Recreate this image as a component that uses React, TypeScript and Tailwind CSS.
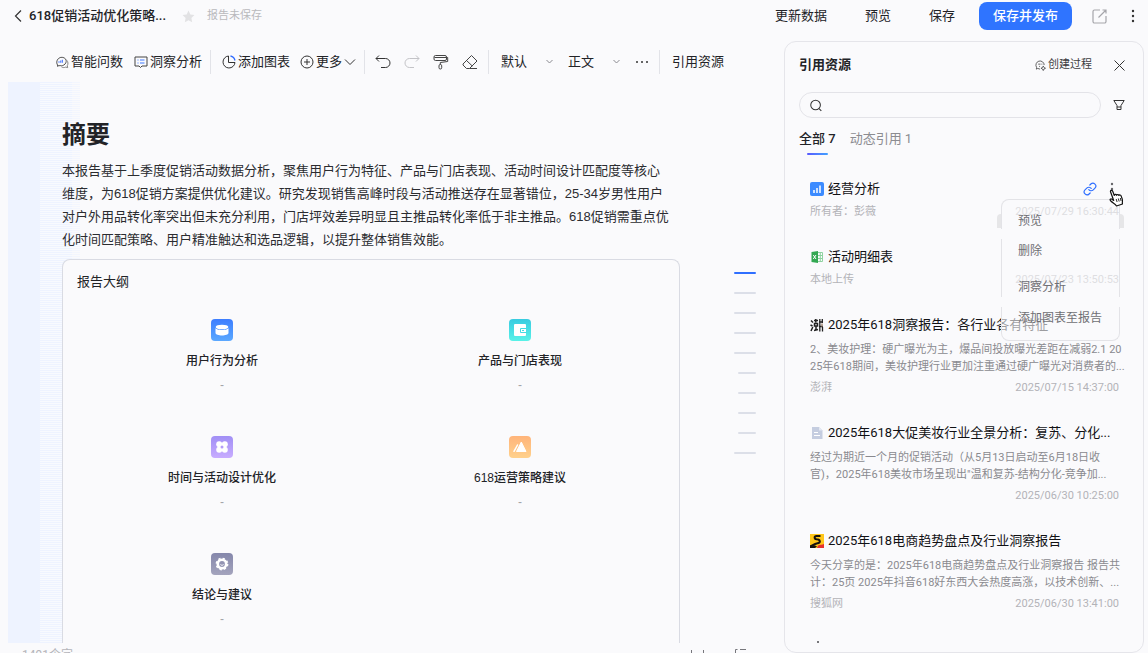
import { Link } from 'lucide-react';
import clsx from 'clsx';

interface Resource {
  title: string;
  icon: React.ReactNode;
  source: string;
  date: string;
  lines?: string[];
}

function AskIcon() {
  return (
    <svg width="14" height="14" viewBox="0 0 14 14" fill="none" stroke="#444" strokeWidth="0.9">
      <path d="M3 10.700A5 5 0 1 1 10.600 4c.9 1.600.8 3.600-.6 5.100-1.300 1.400-3.100 1.900-4.900 1.500L2 11z" />
      <path d="M11.800 5.300c1.400 1.500 1.500 3.800.5 5.300l.4 2-2-.5c-1.700.8-3.200.5-4.300-.3" stroke="#777" />
      <path d="M4 7.800V6.300M5.700 7.800V5.600M7.400 7.800V4.800" stroke="#5b86ff" strokeWidth="1.200" />
    </svg>
  );
}

function InsightIcon() {
  return (
    <svg width="14" height="14" viewBox="0 0 14 14" fill="none" stroke="#444">
      <path d="M1 2h12v9H8L6.500 12.500 5 11H1z" strokeLinejoin="round" />
      <path d="M3.500 5h1M6 5h4.500M3.500 8h1M6 8h4.500" stroke="#3f78ff" />
    </svg>
  );
}

function PieIcon() {
  return (
    <svg width="14" height="14" viewBox="0 0 14 14" fill="none" stroke="#333">
      <path d="M6.500 1A6 6 0 1 0 13 7.500H6.500z" strokeLinejoin="round" />
      <path d="M8.500 1c2.500.5 4 2 4.500 4.500" stroke="#2f6bff" strokeWidth="1.300" />
    </svg>
  );
}

function PlusCircleIcon() {
  return (
    <svg width="14" height="14" viewBox="0 0 14 14" fill="none" stroke="#333">
      <circle cx="7" cy="7" r="6" />
      <path d="M7 4v6M4 7h6" />
    </svg>
  );
}

function UndoIcon() {
  return (
    <svg width="16" height="16" viewBox="0 0 16 16" fill="none" stroke="currentColor">
      <path d="M4 1.500 1 4.500l3 3M1 4.500h9.500a4.500 4.500 0 0 1 0 9H6" />
    </svg>
  );
}

function BrushIcon() {
  return (
    <svg width="16" height="16" viewBox="0 0 16 16" fill="none" stroke="#444">
      <rect x="1" y="1.500" width="12.500" height="5" rx="1.500" />
      <path d="M1.500 3.500H13M13.500 3.500h1.200v4L7.300 8.500v2" />
      <rect x="6" y="10.500" width="2.700" height="4.500" rx="1.300" />
    </svg>
  );
}

function EraserIcon() {
  return (
    <svg width="16" height="16" viewBox="0 0 16 16" fill="none" stroke="#444" strokeLinejoin="round">
      <path d="M9.500 1.500 15 7l-7.500 7.500h-3L1 11v-1zM4.500 6.500 10.300 12M7.500 14.500H15" />
    </svg>
  );
}

function BarsIcon() {
  return (
    <svg width="14" height="14" viewBox="0 0 14 14">
      <rect width="14" height="14" rx="2" fill="#3c8bff" />
      <path d="M4 11V8M7 11V6M10 11V3.500" stroke="#fff" strokeWidth="1.500" />
    </svg>
  );
}

function SheetIcon() {
  return (
    <svg width="14" height="14" viewBox="0 0 14 14">
      <path d="M8 2.500h4.500v9H8M8 5.500h4.500M8 8.500h4.500M10.300 2.500v9" fill="none" stroke="#8ed3a0" />
      <path d="M1.500 2 8 1v12l-6.500-1z" fill="#33a852" />
      <path d="m3.300 5 2.700 4M6 5 3.300 9" stroke="#fff" />
    </svg>
  );
}

function PaperIcon() {
  return (
    <svg width="14" height="14" viewBox="0 0 14 14">
      <path d="M2 1h7l3.500 3.500V13H2z" fill="#c5cde0" />
      <path d="M9 1v3.500h3.500z" fill="#e3e8f2" />
      <path d="M4 6.500h4M4 9.500h6" stroke="#fff" />
    </svg>
  );
}

function PengpaiIcon() {
  return (
    <svg width="14" height="14" viewBox="0 0 14 14" fill="none" stroke="#222" strokeWidth="1.500">
      <path d="m1 2.500 2 2M.5 7l2 1M1 13l1.800-4M5.800 1v3.500M4 2.500h4M4.500 5.500h3v2.500h-3zM4 12.500l4-1M6 8.500v3" />
      <path d="M9.800 1v12.500M12.300 1v4M12.500 9v4.500M9 4h4M9 8.500h4" strokeWidth="1.300" />
      <path d="M12 5.500v3" stroke="#a98e7a" />
    </svg>
  );
}

function SohuIcon() {
  return (
    <svg width="14" height="14" viewBox="0 0 14 14">
      <path d="M0 0h14v14H0z" fill="#ffc619" />
      <path d="M8 11.500c2-.8 4-.5 6-1.500v4H7z" fill="#e6322e" />
      <path d="M10.500 2H6.500C4 2 4 5 6.500 5.300c4 .3 4.500 3.400 1 4C5 9.700 3 11 0 12.500" fill="none" stroke="#16120d" strokeWidth="2" />
      <path d="M0 11.500c3-.5 5-.7 7 1L5 14H0z" fill="#16120d" />
    </svg>
  );
}

const resources: Resource[] = [
  { title: '经营分析', icon: <BarsIcon />, source: '所有者：彭薇', date: '2025/07/29 16:30:44' },
  { title: '活动明细表', icon: <SheetIcon />, source: '本地上传', date: '2025/07/23 13:50:53' },
  {
    title: '2025年618洞察报告：各行业各有特征',
    icon: <PengpaiIcon />,
    source: '澎湃',
    date: '2025/07/15 14:37:00',
    lines: ['2、美妆护理：硬广曝光为主，爆品间投放曝光差距在减弱2.1 20', '25年618期间，美妆护理行业更加注重通过硬广曝光对消费者的...'],
  },
  {
    title: '2025年618大促美妆行业全景分析：复苏、分化...',
    icon: <PaperIcon />,
    source: '',
    date: '2025/06/30 10:25:00',
    lines: ['经过为期近一个月的促销活动（从5月13日启动至6月18日收', '官)，2025年618美妆市场呈现出"温和复苏-结构分化-竞争加...'],
  },
  {
    title: '2025年618电商趋势盘点及行业洞察报告',
    icon: <SohuIcon />,
    source: '搜狐网',
    date: '2025/06/30 13:41:00',
    lines: ['今天分享的是：2025年618电商趋势盘点及行业洞察报告 报告共', '计：25页 2025年抖音618好东西大会热度高涨，以技术创新、...'],
  },
];

const outline = [
  {
    label: '用户行为分析',
    tile: 'bg-linear-to-b from-[#3d7dff] to-[#5ba8ff]',
    glyph: (
      <>
        <path d="M4.500 8.700V14c0 3.300 13 3.300 13 0V8.700c0 3-13 3-13 0z" fill="#fff" />
        <ellipse cx="11" cy="8" rx="6.300" ry="2.300" fill="#fff" />
      </>
    ),
  },
  {
    label: '产品与门店表现',
    tile: 'bg-linear-to-b from-[#38cbe0] to-[#58f2e8]',
    glyph: (
      <>
        <rect x="5" y="5" width="12" height="12" rx="1" fill="#fff" />
        <path d="M17.500 9.500h-6v4h6" fill="none" stroke="#42dbe2" />
        <path d="M13 11.500h2" stroke="#42dbe2" />
      </>
    ),
  },
  {
    label: '时间与活动设计优化',
    tile: 'bg-linear-to-b from-[#a18ff5] to-[#c8acff]',
    glyph: (
      <>
        <path d="M8.300 8.300h5.400v5.400H8.300z" fill="#fff" />
        <circle cx="8.200" cy="8.200" r="3" fill="#fff" />
        <circle cx="13.800" cy="8.200" r="3" fill="#fff" />
        <circle cx="8.200" cy="13.800" r="3" fill="#fff" />
        <circle cx="13.800" cy="13.800" r="3" fill="#fff" />
        <circle cx="11" cy="11" r="1.500" fill="#b49cf9" />
      </>
    ),
  },
  {
    label: '618运营策略建议',
    tile: 'bg-linear-to-b from-[#ffb47a] to-[#ffd18c]',
    glyph: (
      <>
        <path d="M12.300 6 17 15.500H7.500z" fill="#fff" stroke="#fff" strokeLinejoin="round" />
        <path d="M8.500 9 5 15.300" stroke="#fff" strokeWidth="1.500" strokeLinecap="round" />
      </>
    ),
  },
  {
    label: '结论与建议',
    tile: 'bg-linear-to-b from-[#8587ab] to-[#a4a4bd]',
    glyph: (
      <>
        <circle cx="11" cy="11" r="4.200" fill="none" stroke="#fff" strokeWidth="2.600" />
        <circle cx="11" cy="11" r="5.600" fill="none" stroke="#fff" strokeWidth="1.600" strokeDasharray="2.200" />
        <path d="M9.500 11.500c.8 1 2.200 1 3 0" fill="none" stroke="#fff" />
      </>
    ),
  },
];

const summary = [
  '本报告基于上季度促销活动数据分析，聚焦用户行为特征、产品与门店表现、活动时间设计匹配度等核心',
  '维度，为618促销方案提供优化建议。研究发现销售高峰时段与活动推送存在显著错位，25-34岁男性用户',
  '对户外用品转化率突出但未充分利用，门店坪效差异明显且主推品转化率低于非主推品。618促销需重点优',
  '化时间匹配策略、用户精准触达和选品逻辑，以提升整体销售效能。',
];

const anchors = ['active', 'long', 'long', 'long', 'long', 'short', 'short', 'short', 'short', 'long'];

function Divider() {
  return <span className="h-6 w-px bg-[#e2e3e8]" />;
}

function ToolButton({ icon, label }: { icon: React.ReactNode; label: string }) {
  return (
    <button className="flex items-center gap-0.5">
      {icon}
      {label}
    </button>
  );
}

function ToolSelect({ label, value }: { label: string; value: string }) {
  return (
    <label className="relative flex w-[52px] items-center">
      <select aria-label={label} className="w-full appearance-none bg-transparent outline-none">
        <option>{value}</option>
      </select>
      <svg width="7" height="5" viewBox="0 0 7 5" fill="none" stroke="#8a8a90" className="pointer-events-none absolute right-0">
        <path d="m.5 1 3 3 3-3" />
      </svg>
    </label>
  );
}

function TopBar() {
  return (
    <header className="flex h-8 shrink-0 items-center pl-3.5 pr-3 text-[13px] leading-5">
      <button aria-label="返回">
        <svg width="8" height="12" viewBox="0 0 8 12" fill="none" stroke="#333" strokeWidth="1.200">
          <path d="M7 .5 1.500 6 7 11.500" />
        </svg>
      </button>
      <h1 className="ml-[7px] font-medium">618促销活动优化策略...</h1>
      <button aria-label="收藏" className="ml-4">
        <svg width="13" height="13" viewBox="0 0 24 24" fill="#e2e2e4">
          <path d="m12 1 3.400 7.200 7.600 1-5.600 5.400 1.400 7.900L12 18.700l-6.800 3.800 1.400-7.900L1 9.200l7.600-1z" />
        </svg>
      </button>
      <span className="ml-3 text-[11px] text-[#b9b9bd]">报告未保存</span>
      <nav className="ml-auto flex items-center gap-[38px]">
        <button>更新数据</button>
        <button>预览</button>
        <button>保存</button>
      </nav>
      <button className="ml-6 h-7 rounded-lg bg-[#2f74ff] px-3.5 font-medium text-white">保存并发布</button>
      <button aria-label="分享" className="ml-5">
        <svg width="15" height="15" viewBox="0 0 15 15" fill="none" stroke="#a5a5aa" strokeWidth="1.200">
          <path d="M8 1H2.500A1.500 1.500 0 0 0 1 2.500v10A1.500 1.500 0 0 0 2.500 14h10a1.500 1.500 0 0 0 1.500-1.500V7M6.500 8.500 14 1M10.500 1H14v3.500" />
        </svg>
      </button>
      <button aria-label="更多操作" className="ml-[23px]">
        <svg width="6" height="14" viewBox="0 0 6 14" fill="#333">
          <circle cx="3" cy="2" r="1.200" />
          <circle cx="3" cy="7" r="1.200" />
          <circle cx="3" cy="12" r="1.200" />
        </svg>
      </button>
    </header>
  );
}

function Toolbar() {
  return (
    <div className="mt-[9px] flex h-[41px] shrink-0 items-center whitespace-nowrap pl-[55px] text-[13px] leading-5">
      <div className="mr-2 flex gap-[11px]">
        <ToolButton icon={<AskIcon />} label="智能问数" />
        <ToolButton icon={<InsightIcon />} label="洞察分析" />
      </div>
      <Divider />
      <div className="ml-[11px] mr-2 flex gap-2.5">
        <ToolButton icon={<PieIcon />} label="添加图表" />
        <button className="flex items-center gap-0.5">
          <PlusCircleIcon />
          更多
          <svg width="12" height="8" viewBox="0 0 12 8" fill="none" stroke="#333">
            <path d="m1 1.500 5 5 5-5" />
          </svg>
        </button>
      </div>
      <Divider />
      <div className="mx-2.5 flex gap-[13px]">
        <button aria-label="撤销" className="text-[#333]">
          <UndoIcon />
        </button>
        <button aria-label="重做" className="-scale-x-100 text-[#c3c3c7]">
          <UndoIcon />
        </button>
        <button aria-label="格式刷">
          <BrushIcon />
        </button>
        <button aria-label="清除格式">
          <EraserIcon />
        </button>
      </div>
      <Divider />
      <div className="ml-3 mr-2.5 flex items-center gap-[15px]">
        <ToolSelect label="字体" value="默认" />
        <ToolSelect label="样式" value="正文" />
        <button aria-label="更多格式">
          <svg width="14" height="4" viewBox="0 0 14 4" fill="#333">
            <circle cx="2" cy="2" r="1" />
            <circle cx="7" cy="2" r="1" />
            <circle cx="12" cy="2" r="1" />
          </svg>
        </button>
      </div>
      <Divider />
      <button className="ml-3">引用资源</button>
    </div>
  );
}

function ReportPage() {
  return (
    <div className="relative ml-2 flex min-h-0 flex-1 overflow-hidden">
      {/* tinted margin that thins out towards the text */}
      <div className="absolute inset-y-0 left-0 flex">
        <span className="w-8 bg-[#eef3ff]" />
        <span className="w-8 bg-[repeating-linear-gradient(to_bottom,#eef3ff_0px,#eef3ff_1px,#f8fafe_1px,#f8fafe_2px)]" />
        <span className="w-2 bg-[repeating-linear-gradient(to_bottom,#f3f6fe_0px,#f3f6fe_1px,#fafafc_1px,#fafafc_2px)]" />
      </div>
      <article className="relative flex flex-1 flex-col pl-[54px] pt-[37px] font-['Liberation_Sans','Noto_Sans_CJK_SC',sans-serif]">
        <h2 className="text-2xl font-bold leading-8">摘要</h2>
        <p className="mt-2 whitespace-nowrap text-[13px] leading-[23px] text-[#2b2c30]">
          {summary.map((line) => (
            <span key={line} className="block">
              {line}
            </span>
          ))}
        </p>
        <section className="mt-2 flex-1 rounded-t-lg border border-b-0 border-[#d9dbe3] bg-[#fafafc] px-2.5 pt-3">
          <h3 className="px-1 text-[13px] leading-5">报告大纲</h3>
          <ul className="mt-[27px] grid grid-cols-2">
            {outline.map((item) => (
              <li key={item.label} className="flex h-[117px] flex-col items-center text-xs leading-5">
                <span className={clsx('size-[22px] overflow-hidden rounded', item.tile)}>
                  <svg width="22" height="22" viewBox="0 0 22 22">
                    {item.glyph}
                  </svg>
                </span>
                <span className="mt-2.5 font-medium">{item.label}</span>
                <span className="mt-1 text-[#a3a3a8]">-</span>
              </li>
            ))}
          </ul>
        </section>
      </article>
      <nav aria-label="目录" className="ml-[54px] mr-7 flex w-[22px] flex-col items-end gap-[18px] pt-[190px]">
        {anchors.map((kind, i) => (
          <a
            key={i}
            href="#"
            aria-label={`第${i + 1}节`}
            className={clsx(
              'h-0.5 shrink-0 rounded-full',
              kind === 'short' ? 'w-[18px]' : 'w-full',
              kind === 'active' ? 'bg-[#2f6fff]' : 'bg-[#dcdfe8]',
            )}
          />
        ))}
      </nav>
    </div>
  );
}

function StatusBar() {
  return (
    <footer className="flex h-2.5 shrink-0 items-start justify-between overflow-hidden pl-[22px] pr-9 pt-1 text-xs leading-4 text-[#b5b5ba]">
      <span>1491个字</span>
      <span className="flex gap-7 pt-0.5">
        <svg width="16" height="14" viewBox="0 0 16 14" fill="none" stroke="#77777c">
          <path d="M1.500 1v12M13.500 1v12" />
        </svg>
        <svg width="14" height="14" viewBox="0 0 14 14" fill="none" stroke="#77777c">
          <path d="M3.500.5h-2v12M6 .5h6" />
        </svg>
      </span>
    </footer>
  );
}

function ItemMenu() {
  return (
    <div className="absolute -right-px top-5 z-10 flex w-[119px] flex-col gap-2.5 rounded-lg bg-[#fafafc]/60 text-xs leading-5 text-[#6f6f74]">
      <span className="absolute -left-1 top-[15px] h-3.5 w-1 rounded-tl-full bg-[#e6e6e8]" />
      <span className="absolute -right-1 top-[15px] h-3.5 w-1 rounded-tr-full bg-[#e6e6e8]" />
      <div className="flex h-[30px] flex-col rounded-t-lg border-x border-t border-[#e3e3e7] pl-4 pt-[11px]">
        <button className="h-5 text-left">预览</button>
      </div>
      <div className="flex h-[58px] flex-col justify-between border-x border-[#e3e3e7] pl-4 pt-0.5">
        <button className="h-5 text-left">删除</button>
        <button className="h-5 text-left">洞察分析</button>
      </div>
      <div className="flex h-[34px] flex-col whitespace-nowrap rounded-b-lg border-x border-b border-[#e3e3e7] pl-4 pt-px">
        <button className="h-5 text-left">添加图表至报告</button>
      </div>
    </div>
  );
}

function HandCursor() {
  return (
    <svg width="16" height="18" viewBox="0 0 16 18" className="pointer-events-none absolute -right-1.5 top-2.5 z-20">
      <path
        d="M3.800 9 1.600 3C1 1.300 3.100.6 3.700 2.200L5.300 6.500C5.300 5.300 7.200 5 7.600 6.300 7.900 5.200 9.600 5.200 9.900 6.500 10.400 5.600 11.900 5.900 12.200 7.100L13.300 10.300C13.800 12 13 13.500 13.500 15L7.500 17C6.500 15.200 4 14 1.800 12 .2 10.500 1.700 9.400 3 10.200L4.700 11.400z"
        fill="#fff"
        stroke="#111"
        strokeWidth="1.200"
        strokeLinejoin="round"
      />
      <path d="m7.200 10 .9 3M9.300 9.500l.9 3M11.300 9l.8 3" stroke="#111" strokeWidth="0.900" />
    </svg>
  );
}

function ResourceItem({ item, active }: { item: Resource; active: boolean }) {
  return (
    <li className="relative">
      <div className="flex items-center gap-1 whitespace-nowrap text-[13px] leading-5 text-[#111114]">
        {item.icon}
        <span>{item.title}</span>
        {active && (
          <span className="ml-auto flex items-center gap-3">
            <button aria-label="复制链接">
              <Link size={14} strokeWidth={2} className="text-[#2f6fff]" />
            </button>
            <button aria-label="资源操作">
              <svg width="10" height="14" viewBox="0 0 10 14" fill="#66666a">
                <circle cx="3" cy="2" r="1.200" />
                <circle cx="3" cy="7" r="1.200" />
                <circle cx="3" cy="12" r="1.200" />
              </svg>
            </button>
          </span>
        )}
      </div>
      {item.lines && (
        <p className="mt-1.5 whitespace-nowrap text-[11px] leading-[17px] text-[#8a8a8f]">
          {item.lines.map((line) => (
            <span key={line} className="block">
              {line}
            </span>
          ))}
        </p>
      )}
      <div className="mt-[5px] flex justify-between text-[11px] leading-4 text-[#b3b3b8]">
        <span>{item.source}</span>
        <time>{item.date}</time>
      </div>
      {active && (
        <>
          <ItemMenu />
          <HandCursor />
        </>
      )}
    </li>
  );
}

function ResourcePanel() {
  return (
    <aside className="mr-1 mt-[9px] flex w-[360px] shrink-0 flex-col overflow-hidden rounded-xl border border-[#e5e5ea] px-3.5 pt-[7px]">
      <div className="flex h-8 items-center">
        <h2 className="text-[13px] font-bold leading-5">引用资源</h2>
        <button className="ml-auto flex items-center gap-0.5 text-[11px] leading-4 text-[#3c3c40]">
          <svg width="11" height="11" viewBox="0 0 12 12" fill="none" stroke="#555">
            <path d="M5.500 10 3 9.200 1.500 10l.2-2A4.500 4.500 0 1 1 10 5.500" />
            <path d="M3.500 4.500h2.500M7 4.500h1M4.500 7h1" />
            <path d="m9 6.500.8 1.700 1.700.8-1.700.8L9 11.500l-.8-1.700L6.500 9l1.700-.8z" />
          </svg>
          创建过程
        </button>
        <button aria-label="关闭" className="ml-[22px] mr-1">
          <svg width="11" height="11" viewBox="0 0 11 11" fill="none" stroke="#333">
            <path d="m.5.500 10 10M10.500.5l-10 10" />
          </svg>
        </button>
      </div>
      <div className="mt-[11px] flex items-center">
        <label className="flex h-[26px] flex-1 items-center rounded-full border border-[#e3e3e8] px-2.5">
          <svg width="13" height="13" viewBox="0 0 13 13" fill="none" stroke="#333" strokeWidth="1.100">
            <circle cx="6" cy="6" r="5.200" />
            <path d="m9.800 9.800 2.400 2.400" />
          </svg>
          <input aria-label="搜索资源" className="ml-2 w-full bg-transparent text-xs outline-none" />
        </label>
        <button aria-label="筛选" className="ml-3 mr-1">
          <svg width="12" height="12" viewBox="0 0 12 12" fill="none" stroke="#333">
            <path d="M.8 1.500h10.400L8 6.500v4H4v-4zM4 8h4" strokeLinejoin="round" />
          </svg>
        </button>
      </div>
      <div className="mt-[11px] flex items-start gap-3.5 text-[13px] leading-5">
        <button className="flex flex-col items-center gap-1 font-medium">
          全部 7
          <span className="h-0.5 w-[21px] rounded-full bg-linear-to-r from-[#5757ff] to-[#3fa0ff]" />
        </button>
        <button className="text-[#8c8c91]">动态引用 1</button>
      </div>
      <ul className="mt-6 flex flex-col gap-[27px] pl-[11px] pr-2.5">
        {resources.map((item, i) => (
          <ResourceItem key={item.title} item={item} active={i === 0} />
        ))}
        <li className="pl-[7px]">
          <span className="mt-0.5 block size-0.5 bg-[#77777b]" />
        </li>
      </ul>
    </aside>
  );
}

export default function App() {
  return (
    <div className="flex h-screen flex-col overflow-hidden bg-[#fafafc] font-['Roboto','Noto_Sans_CJK_SC',sans-serif] text-[#222327]">
      <TopBar />
      <div className="flex min-h-0 flex-1">
        <main className="flex min-w-0 flex-1 flex-col">
          <Toolbar />
          <ReportPage />
          <StatusBar />
        </main>
        <ResourcePanel />
      </div>
    </div>
  );
}
